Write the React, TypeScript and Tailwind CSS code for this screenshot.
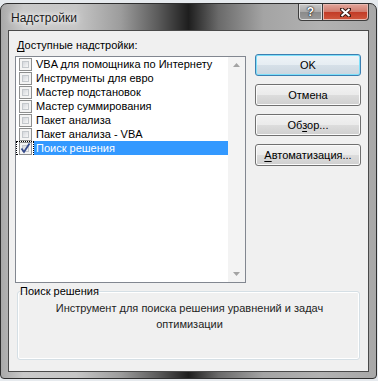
const items = [
  { label: 'VBA для помощника по Интернету', checked: false },
  { label: 'Инструменты для евро', checked: false },
  { label: 'Мастер подстановок', checked: false },
  { label: 'Мастер суммирования', checked: false },
  { label: 'Пакет анализа', checked: false },
  { label: 'Пакет анализа - VBA', checked: false },
  { label: 'Поиск решения', checked: true },
];

const selectedIndex = 6;

function CheckBox({ checked }: { checked: boolean }) {
  return (
    <span className="flex h-[13px] w-[13px] shrink-0 border border-[#8e8f8f] bg-[#f4f4f4] p-[2px]">
      <span className="flex h-full w-full items-center justify-center border border-[#c4c8cc] bg-gradient-to-br from-[#d4d7dc] to-[#f7f7f7]">
        {checked && (
          <svg width="11" height="11" viewBox="0 0 11 11" className="overflow-visible">
            <path d="M1.5 5.5 L4 9 L9.5 0.5" fill="none" stroke="#354a8c" strokeWidth="1.8" />
          </svg>
        )}
      </span>
    </span>
  );
}

function DialogButton({ children, primary }: { children: React.ReactNode; primary?: boolean }) {
  return (
    <button
      className={
        primary
          ? 'h-[22px] w-[106px] rounded-[3px] border border-[#3c7fb1] bg-[linear-gradient(#eef4f8_0%,#e6edf2_50%,#d6e0e8_50%,#cbd6df_100%)] text-[11px] leading-none text-black shadow-[inset_0_0_0_1px_#7fe0fa]'
          : 'h-[22px] w-[106px] rounded-[3px] border border-[#707070] bg-[linear-gradient(#f2f2f2_0%,#ebebeb_50%,#dddddd_50%,#cfcfcf_100%)] text-[11px] leading-none text-black shadow-[inset_0_0_0_1px_#fbfbfb]'
      }
    >
      {children}
    </button>
  );
}

export default function App() {
  return (
    <div className="h-[381px] w-[378px] overflow-hidden bg-[#e6eaee] pt-[3px] font-['Liberation_Sans',Arial,sans-serif] text-[11px] text-black">
      <div className="flex h-[376px] w-[377px] flex-col rounded-t-[7px] rounded-b-[4px] border border-[#2e2e2e] bg-[linear-gradient(90deg,#a9a9a9_0%,#c9c9c9_6%,#c6c6c6_20%,#9c9c9c_32%,#5a5a5a_42%,#1e1e1e_50%,#6a6a6a_58%,#a4a4a4_70%,#b2b2b2_85%,#a8a8a8_100%)] px-[7px] pb-[6px]">
        {/* Title bar */}
        <div className="flex h-[26px] items-start justify-between">
          <span className="mt-[5px] pl-[3px] text-[12px] text-[#1a1a1a] [text-shadow:0_0_8px_#ffffff,0_0_4px_#ffffff]">
            Надстройки
          </span>
          <div className="flex">
            <div className="flex h-[17px] w-[25px] items-center justify-center rounded-bl-[4px] border border-t-0 border-[#3d3d3d] bg-[linear-gradient(#c8c8c8_0%,#a8a8a8_50%,#8a8a8a_50%,#9a9a9a_100%)] shadow-[inset_0_0_0_1px_#dcdcdc]">
              <span className="text-[12px] font-bold leading-none text-white [text-shadow:0_0_2px_#000,0_0_1px_#000]">?</span>
            </div>
            <div className="flex h-[17px] w-[46px] items-center justify-center rounded-br-[4px] border border-t-0 border-l-0 border-[#3d3d3d] bg-[linear-gradient(#e2a69c_0%,#d07a6c_50%,#c23a26_50%,#d0583e_100%)] shadow-[inset_0_0_0_1px_#e6b8b0]">
              <svg width="11" height="9" viewBox="0 0 11 9">
                <path d="M1 0.5 L10 8.5 M10 0.5 L1 8.5" stroke="#3a1a14" strokeWidth="4" strokeLinecap="square" />
                <path d="M1.5 1 L9.5 8 M9.5 1 L1.5 8" stroke="#ffffff" strokeWidth="2" />
              </svg>
            </div>
          </div>
        </div>

        {/* Client area */}
        <div className="flex flex-1 flex-col border border-[#4a4a4a] bg-[#f0f0f0] px-[6px] pt-[6px]">
          <div className="flex items-start">
            <div className="flex w-[231px] flex-col">
              <div className="h-[16px] whitespace-nowrap pl-[2px] leading-[16px]">
                <span className="underline underline-offset-2">Д</span>оступные надстройки:
              </div>
              <div className="mt-[3px] flex h-[227px] border border-[#828790] bg-white">
                <div className="flex min-w-0 flex-1 flex-col">
                  {items.map((item, i) => (
                    <div key={item.label} className="flex h-[14px] items-center">
                      <div
                        className={
                          i === selectedIndex
                            ? 'flex h-[14px] items-center border border-dotted border-black pl-[2px] pr-[1px]'
                            : 'flex h-[14px] items-center pl-[3px] pr-[2px]'
                        }
                      >
                        <CheckBox checked={item.checked} />
                      </div>
                      <div
                        className={
                          i === selectedIndex
                            ? 'flex h-[14px] flex-1 items-center whitespace-nowrap bg-[#3399ff] pl-[2px] leading-none text-white'
                            : 'flex h-[14px] flex-1 items-center whitespace-nowrap pl-[2px] leading-none'
                        }
                      >
                        {item.label}
                      </div>
                    </div>
                  ))}
                </div>
                <div className="flex w-[17px] flex-col items-center justify-between bg-[#f3f3f3] py-[6px]">
                  <svg width="7" height="4" viewBox="0 0 7 4">
                    <path d="M0 4 L3.5 0 L7 4 Z" fill="#a3a3a3" />
                  </svg>
                  <svg width="7" height="4" viewBox="0 0 7 4">
                    <path d="M0 0 L3.5 4 L7 0 Z" fill="#a3a3a3" />
                  </svg>
                </div>
              </div>
            </div>
            <div className="ml-[9px] flex flex-col gap-[8px] pt-[17px]">
              <DialogButton primary>OK</DialogButton>
              <DialogButton>Отмена</DialogButton>
              <DialogButton>
                Об<span className="underline underline-offset-2">з</span>ор...
              </DialogButton>
              <DialogButton>
                <span className="underline underline-offset-2">А</span>втоматизация...
              </DialogButton>
            </div>
          </div>

          <fieldset className="ml-[2px] mr-[2px] rounded-[3px] border border-[#d5dfe5] pl-[2px] shadow-[inset_0_0_0_1px_#ffffff]">
            <legend className="leading-[16px]">Поиск решения</legend>
            <div className="h-[60px] pt-[1px] text-center leading-[16px] text-[#1e1e1e]">
              Инструмент для поиска решения уравнений и задач
              <br />
              оптимизации
            </div>
          </fieldset>
        </div>
      </div>
    </div>
  );
}
